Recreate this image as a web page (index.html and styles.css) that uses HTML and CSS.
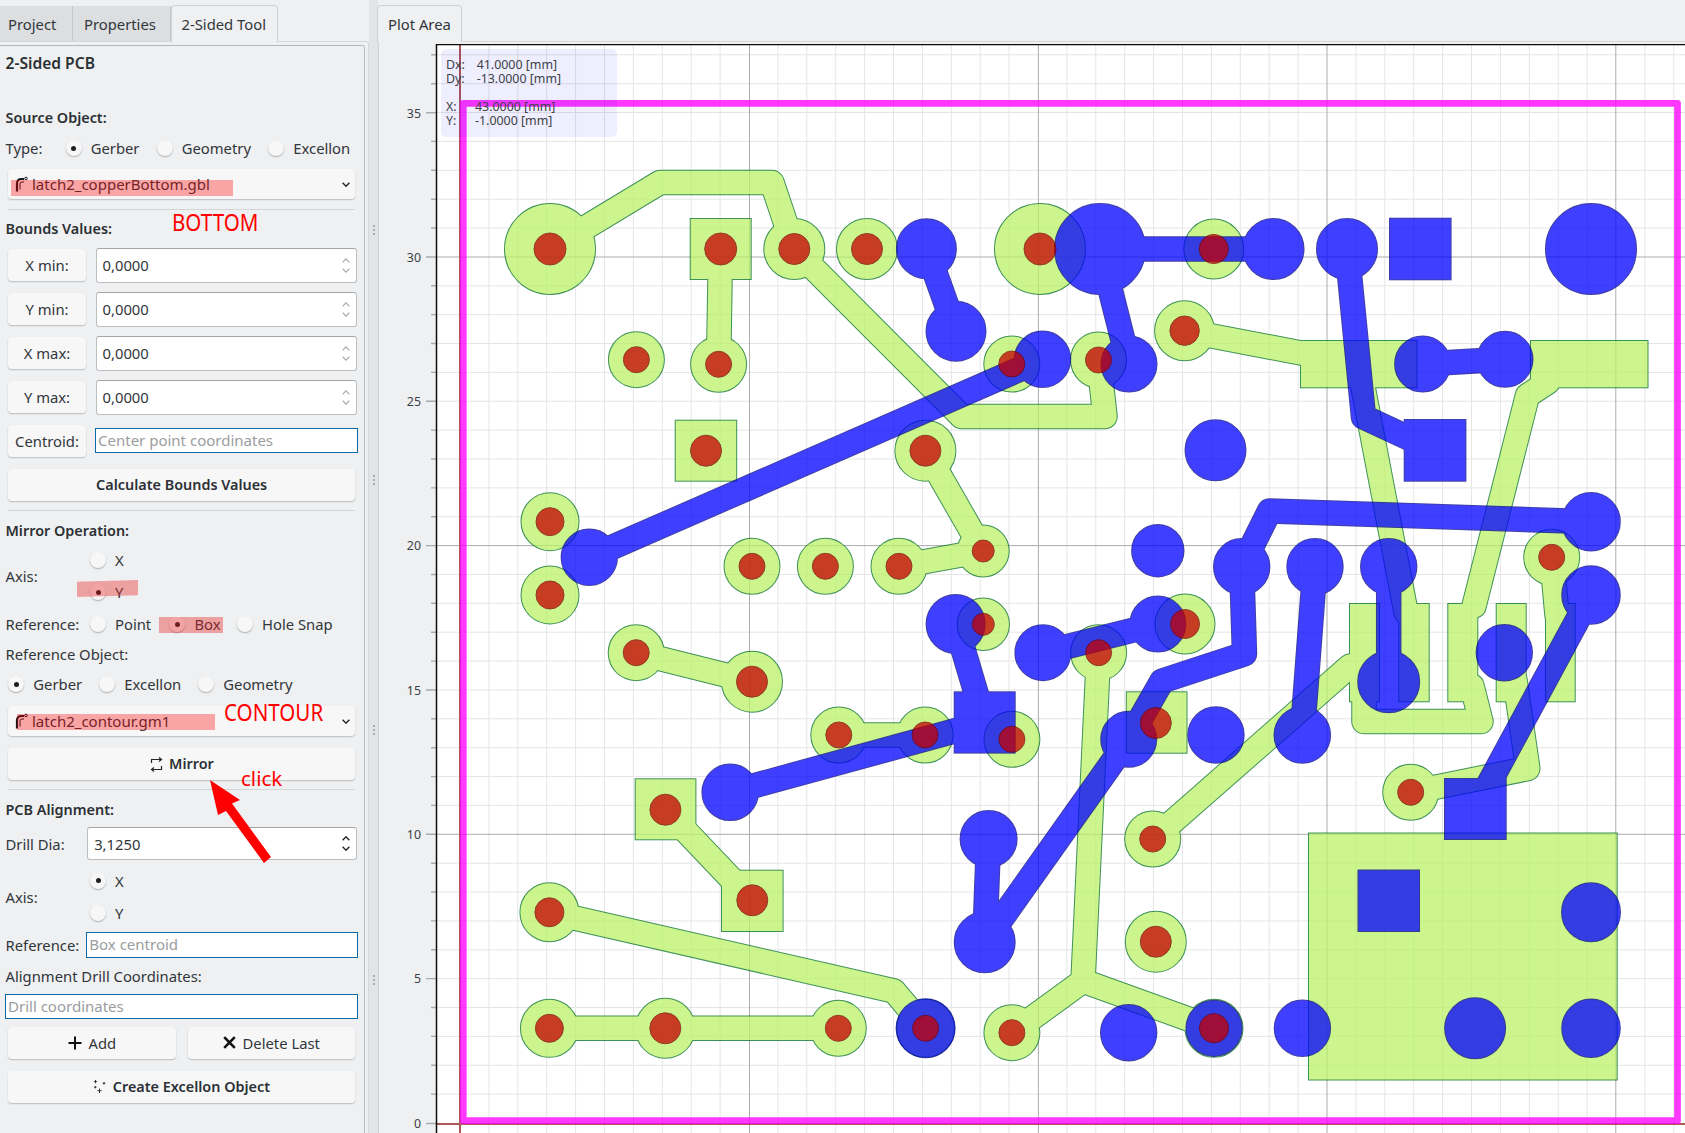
FILE: index.html
```html
<!DOCTYPE html>
<html lang="en">
<head>
<meta charset="utf-8">
<title>2-Sided PCB</title>
<link rel="stylesheet" href="styles.css">
</head>
<body>
<svg class="defs" width="0" height="0" aria-hidden="true">
  <symbol id="chev-down" viewBox="0 0 8 5"><path d="M.6.7 4 4.2 7.4.7"/></symbol>
  <symbol id="chev-up" viewBox="0 0 8 5"><path d="M.6 4.3 4 .8l3.4 3.5"/></symbol>
  <symbol id="i-gerber" viewBox="0 0 13 16"><path class="ic-b" d="M2 15.500V7.500Q2 3 6.500 3H9"/><path class="ic-t" d="M5 13.500V8Q5 6 7 6H9"/><circle class="ic-t" cx="11" cy="2.500" r="1.300"/></symbol>
</svg>
<div class="window">
  <aside class="left-dock">
    <nav class="tabs">
      <span class="tab t-project">Project</span>
      <span class="tab t-props">Properties</span>
      <span class="tab active t-tool">2-Sided Tool</span>
    </nav>
    <div class="outer-frame">
      <section class="panel">
        <div class="line title m7">2-Sided PCB</div>
        <div class="line strong m35">Source Object:</div>
        <div class="line opts type-row m10">
          <span>Type:</span>
          <label class="opt"><i class="radio on"></i>Gerber</label>
          <label class="opt"><i class="radio"></i>Geometry</label>
          <label class="opt"><i class="radio"></i>Excellon</label>
        </div>
        <div class="combo m11">
          <svg class="gerber-icon"><use href="#i-gerber"/></svg>
          <span class="grow">latch2_copperBottom.gbl</span>
          <svg class="chev"><use href="#chev-down"/></svg>
        </div>
        <hr class="sep s-a">
        <div class="line strong m9">Bounds Values:</div>
        <div class="field-row m9"><button class="btn">X min:</button><div class="spin"><span class="grow">0,0000</span><span class="arrows"><svg class="chev-s"><use href="#chev-up"/></svg><svg class="chev-s"><use href="#chev-down"/></svg></span></div></div>
        <div class="field-row m9"><button class="btn">Y min:</button><div class="spin"><span class="grow">0,0000</span><span class="arrows"><svg class="chev-s"><use href="#chev-up"/></svg><svg class="chev-s"><use href="#chev-down"/></svg></span></div></div>
        <div class="field-row m9"><button class="btn">X max:</button><div class="spin"><span class="grow">0,0000</span><span class="arrows"><svg class="chev-s"><use href="#chev-up"/></svg><svg class="chev-s"><use href="#chev-down"/></svg></span></div></div>
        <div class="field-row m9"><button class="btn">Y max:</button><div class="spin"><span class="grow">0,0000</span><span class="arrows"><svg class="chev-s"><use href="#chev-up"/></svg><svg class="chev-s"><use href="#chev-down"/></svg></span></div></div>
        <div class="centroid-row m10"><button class="btn">Centroid:</button><div class="text-in c-in">Center point coordinates</div></div>
        <button class="btn wide bold m12">Calculate Bounds Values</button>
        <hr class="sep s-b">
        <div class="line strong m10">Mirror Operation:</div>
        <div class="axis-block m3">
          <span class="axis-label">Axis:</span>
          <div class="axis-opts">
            <label class="opt"><i class="radio"></i>X</label>
            <label class="opt"><i class="radio on"></i>Y</label>
          </div>
        </div>
        <div class="line opts ref-row m6">
          <span>Reference:</span>
          <label class="opt"><i class="radio"></i>Point</label>
          <label class="opt"><i class="radio on"></i>Box</label>
          <label class="opt"><i class="radio"></i>Hole Snap</label>
        </div>
        <div class="line m10">Reference Object:</div>
        <div class="line opts refobj-row m10">
          <label class="opt"><i class="radio on"></i>Gerber</label>
          <label class="opt"><i class="radio"></i>Excellon</label>
          <label class="opt"><i class="radio"></i>Geometry</label>
        </div>
        <div class="combo m12">
          <svg class="gerber-icon"><use href="#i-gerber"/></svg>
          <span class="grow">latch2_contour.gm1</span>
          <svg class="chev"><use href="#chev-down"/></svg>
        </div>
        <button class="btn wide bold m12">
          <svg class="ic ic-mirror" viewBox="0 0 13 15"><path d="M1.500 6V2.500H11.500M9 .5l2.500 2-2.500 2M11.500 9v3.500H1.500M4 10.500l-2.500 2 2.500 2"/></svg>
          Mirror
        </button>
        <hr class="sep s-c">
        <div class="line strong m10">PCB Alignment:</div>
        <div class="drill-row m7"><span>Drill Dia:</span><div class="spin dark"><span class="grow">3,1250</span><span class="arrows"><svg class="chev-s"><use href="#chev-up"/></svg><svg class="chev-s"><use href="#chev-down"/></svg></span></div></div>
        <div class="axis-block m5">
          <span class="axis-label">Axis:</span>
          <div class="axis-opts">
            <label class="opt"><i class="radio on"></i>X</label>
            <label class="opt"><i class="radio"></i>Y</label>
          </div>
        </div>
        <div class="ref-in-row m3"><span>Reference:</span><div class="text-in">Box centroid</div></div>
        <div class="line m8">Alignment Drill Coordinates:</div>
        <div class="text-in drill-in m8">Drill coordinates</div>
        <div class="pair m8">
          <button class="btn">
            <svg class="ic ic-plus" viewBox="0 0 14 14"><path d="M7 .5v13M.5 7h13"/></svg>
            Add
          </button>
          <button class="btn">
            <svg class="ic ic-x" viewBox="0 0 13 13"><path d="M1.200 1.200l10.600 10.600M11.800 1.200 1.200 11.800"/></svg>
            Delete Last
          </button>
        </div>
        <button class="btn wide bold m12">
          <svg class="ic ic-spark" viewBox="0 0 13 13"><path d="M2.500 0v3.200M.9 1.600h3.200M11 2v2.600M9.700 3.300h2.600M2.300 6v2.400M1.100 7.200h2.400M6.500 8.500V13M4.300 10.700h4.400"/></svg>
          Create Excellon Object
        </button>
      </section>
    </div>
    <span class="mark mark-bottom"></span>
    <span class="mark mark-y"></span>
    <span class="mark mark-box"></span>
    <span class="mark mark-contour"></span>
    <span class="note caps note-bottom">BOTTOM</span>
    <span class="note caps note-contour">CONTOUR</span>
    <span class="note note-click">click</span>
    <svg class="red-arrow" width="80" height="100" viewBox="200 770 80 100"><polygon points="210,780 240,800 232,803.500 271,857 264,863 226,811 218,815"/></svg>
  </aside>
  <div class="splitter"><i></i><i></i><i></i><i></i></div>
  <main class="right-dock">
    <nav class="tabs"><span class="tab active t-plot">Plot Area</span></nav>
    <div class="plot-frame">
      <svg class="plot" width="1306" height="1089" viewBox="379 44 1306 1089">
        <defs>
          <g id="lime-pads">
            <circle cx="550" cy="249" r="45"/><circle cx="794.300" cy="249" r="30"/><circle cx="867" cy="249" r="30"/><circle cx="1040" cy="249" r="45"/><circle cx="1213.800" cy="249" r="29.500"/><circle cx="636.400" cy="359.700" r="27.500"/><circle cx="718.600" cy="364.300" r="27.500"/><circle cx="1011.800" cy="364" r="27.500"/><circle cx="1098.500" cy="360" r="27.500"/><circle cx="1184.600" cy="330.700" r="29.500"/><circle cx="925.400" cy="450.700" r="30"/><circle cx="550" cy="521.700" r="28.500"/><circle cx="550" cy="595" r="28.500"/><circle cx="752" cy="566.300" r="27.500"/><circle cx="825.400" cy="566.300" r="27.500"/><circle cx="899" cy="566.300" r="27.500"/><circle cx="983.200" cy="551" r="25.500"/><circle cx="1551.700" cy="557.300" r="27.500"/><circle cx="983.300" cy="624.300" r="25.700"/><circle cx="1185" cy="624" r="29.500"/><circle cx="1098.600" cy="652.700" r="27.500"/><circle cx="636.200" cy="652.700" r="27.500"/><circle cx="752" cy="681.700" r="30"/><circle cx="838.800" cy="735" r="27.500"/><circle cx="925.100" cy="735" r="27.500"/><circle cx="1011.900" cy="739.300" r="27.500"/><circle cx="1410.700" cy="792.300" r="27.500"/><circle cx="1152.700" cy="839" r="27.500"/><circle cx="1155.800" cy="941.700" r="30"/><circle cx="549.400" cy="912.300" r="29"/><circle cx="549.400" cy="1028.300" r="28.500"/><circle cx="665.300" cy="1028.300" r="29.500"/><circle cx="838.300" cy="1028.300" r="27.500"/><circle cx="925.600" cy="1028.300" r="28.500"/><circle cx="1011.900" cy="1032.700" r="27.500"/><circle cx="1214" cy="1028.300" r="28.500"/>
            <rect x="690.700" y="219" width="60" height="60"/><rect x="675.700" y="420.700" width="60.500" height="60"/><rect x="1126.800" y="692.300" width="59.700" height="60.400"/><rect x="635.700" y="779.300" width="59.700" height="60"/><rect x="722" y="870.700" width="60.600" height="60.300"/>
            <rect x="1301" y="341" width="115.500" height="46.300"/><rect x="1531" y="341" width="116.500" height="46.300"/><rect x="1350" y="604" width="29" height="97.300"/><rect x="1399.300" y="604" width="29.400" height="97.300"/><rect x="1448.300" y="604" width="29" height="97.300"/><rect x="1496.700" y="604" width="29" height="97.300"/><rect x="1546" y="604" width="28.700" height="97.300"/><rect x="1309" y="833.500" width="307.700" height="246"/>
          </g>
          <path id="lime-tracks" d="M550 249 660 182.500H772L794.300 249M720.500 249 718.600 364.300M794.300 249 961.500 416.500H1105L1101.500 385 1098.500 360M925.400 450.700 983 551M899 566.300 983.200 551M636.200 652.700 752 681.700M838.800 735H925M665.500 809.700 752.300 901M549.400 912.300 894 991 925.600 1028.300M549.400 1028.300H838.300M1098.600 652.700 1083 981M1011.900 1032.700 1083 981 1214 1028.300M1153 839 1350 666M1184.600 330.700 1301 353M1548 382 1527.500 395.500 1474 606M1364 700V721.600H1481L1472 686M1363 387 1406 612M1551.700 557.300 1557 615M1410.700 792.300 1527.800 768.500 1515 680"/>
          <g id="blue-pads">
            <circle cx="926.400" cy="248.700" r="29.500"/><circle cx="956" cy="331.300" r="29.500"/><circle cx="1042.500" cy="359.300" r="27.700"/><circle cx="589.300" cy="557.300" r="27.700"/><circle cx="1100" cy="249" r="45"/><circle cx="1273.500" cy="249" r="30"/><circle cx="1347" cy="249" r="30"/><circle cx="1591" cy="249" r="45"/><circle cx="1129" cy="364" r="27.500"/><circle cx="1422.600" cy="364" r="27.500"/><circle cx="1505" cy="359.300" r="27.500"/><circle cx="1215.500" cy="450.300" r="30"/><circle cx="1157.800" cy="550.700" r="25.700"/><circle cx="1241.700" cy="566.700" r="27.700"/><circle cx="1315" cy="566.700" r="27.700"/><circle cx="1388.700" cy="566.700" r="27.700"/><circle cx="1591" cy="521.700" r="28.800"/><circle cx="1591" cy="595" r="28.800"/><circle cx="1504.300" cy="652.700" r="27.700"/><circle cx="955.600" cy="624" r="29"/><circle cx="1157.800" cy="624" r="27.500"/><circle cx="1042.900" cy="652.700" r="27.500"/><circle cx="1128.700" cy="739.300" r="27.500"/><circle cx="1216" cy="735" r="27.700"/><circle cx="1302.300" cy="735" r="27.800"/><circle cx="1388.700" cy="681.700" r="30.500"/><circle cx="730.200" cy="792.300" r="27.800"/><circle cx="988.600" cy="839" r="28"/><circle cx="984.700" cy="942.300" r="30"/><circle cx="1591" cy="912.300" r="29"/><circle cx="925.600" cy="1028.300" r="29"/><circle cx="1128.700" cy="1032.700" r="27.700"/><circle cx="1214" cy="1028.300" r="27.600"/><circle cx="1302.400" cy="1028.300" r="27.700"/><circle cx="1475.100" cy="1028.300" r="30"/><circle cx="1591" cy="1028.300" r="28.800"/>
            <rect x="1390" y="218.700" width="60.600" height="60.600"/><rect x="1404.700" y="420" width="60.700" height="60.700"/><rect x="954.700" y="692.300" width="60" height="60.300"/><rect x="1445" y="779" width="60.700" height="60"/><rect x="1358.500" y="870.500" width="60.500" height="60.500"/>
          </g>
          <path id="blue-tracks" d="M589.300 557.300 1042.500 359.300M926.400 248.700 956 331.300M1100 249H1273.500M1100 249 1129 364M1347 249 1363.500 417 1435 450.300M1422.600 364 1505 359.300M1591 521.700 1269.500 511 1241.700 566.700M1241.700 566.700 1244.500 654 1162 681 1128.700 739.300 985 942M1315 566.700 1302.300 735M1388.700 566.700V681.700M1591 595 1475.300 809M955.600 624 984.800 722.500M730.200 792.300 985 722.600M1042.900 652.700 1157.800 624M988.600 839 984.700 942.300"/>
        </defs>

        <rect class="canvas" x="436" y="44" width="1249" height="1089"/>
        <path class="grid-minor" d="M488.900 44V1133M517.800 44V1133M546.700 44V1133M575.600 44V1133M604.500 44V1133M633.400 44V1133M662.300 44V1133M691.200 44V1133M720.100 44V1133M777.900 44V1133M806.800 44V1133M835.700 44V1133M864.600 44V1133M893.500 44V1133M922.400 44V1133M951.300 44V1133M980.200 44V1133M1009.100 44V1133M1066.900 44V1133M1095.800 44V1133M1124.700 44V1133M1153.600 44V1133M1182.500 44V1133M1211.400 44V1133M1240.300 44V1133M1269.200 44V1133M1298.100 44V1133M1355.900 44V1133M1384.800 44V1133M1413.700 44V1133M1442.600 44V1133M1471.500 44V1133M1500.400 44V1133M1529.300 44V1133M1558.200 44V1133M1587.100 44V1133M1644.900 44V1133M1673.800 44V1133M436 1094.100H1685M436 1065.300H1685M436 1036.400H1685M436 1007.500H1685M436 978.600H1685M436 949.800H1685M436 920.900H1685M436 892H1685M436 863.200H1685M436 805.400H1685M436 776.600H1685M436 747.700H1685M436 718.800H1685M436 690H1685M436 661.100H1685M436 632.200H1685M436 603.300H1685M436 574.500H1685M436 516.700H1685M436 487.900H1685M436 459H1685M436 430.100H1685M436 401.200H1685M436 372.400H1685M436 343.500H1685M436 314.600H1685M436 285.800H1685M436 228H1685M436 199.200H1685M436 170.300H1685M436 141.400H1685M436 112.500H1685M436 83.700H1685M436 54.800H1685"/>
        <path class="grid-major" d="M749.500 44V1133M1038.400 44V1133M1327 44V1133M1615.800 44V1133M436 834.300H1685M436 545.600H1685M436 257H1685"/>

        <g class="layer lime">
          <use class="pad-edge" href="#lime-pads"/>
          <use class="track-edge" href="#lime-tracks"/>
          <use class="pad-fill" href="#lime-pads"/>
          <use class="track-fill" href="#lime-tracks"/>
        </g>
        <g class="layer blue">
          <use class="pad-edge" href="#blue-pads"/>
          <use class="track-edge" href="#blue-tracks"/>
          <use class="pad-fill" href="#blue-pads"/>
          <use class="track-fill" href="#blue-tracks"/>
        </g>
        <g class="layer drills">
          <circle cx="550" cy="249" r="16"/><circle cx="720.700" cy="249" r="16"/><circle cx="794.300" cy="249" r="15.500"/><circle cx="867" cy="249" r="15.500"/><circle cx="1040" cy="249" r="16"/><circle cx="1213.800" cy="249" r="14.600"/><circle cx="636.400" cy="359.700" r="13"/><circle cx="718.600" cy="364.300" r="13"/><circle cx="1011.800" cy="364" r="13"/><circle cx="1098.500" cy="360" r="13"/><circle cx="1184.600" cy="330.700" r="14.700"/><circle cx="706" cy="450.700" r="15.500"/><circle cx="925.400" cy="450.700" r="15.500"/><circle cx="550" cy="521.700" r="14"/><circle cx="550" cy="595" r="14"/><circle cx="752" cy="566.300" r="13"/><circle cx="825.400" cy="566.300" r="13"/><circle cx="899" cy="566.300" r="13"/><circle cx="983.200" cy="551" r="11"/><circle cx="1551.700" cy="557.300" r="13"/><circle cx="983.300" cy="624.300" r="11"/><circle cx="1185" cy="624" r="14.500"/><circle cx="1098.600" cy="652.700" r="13"/><circle cx="636.200" cy="652.700" r="13"/><circle cx="752" cy="681.700" r="15.500"/><circle cx="838.800" cy="735" r="13"/><circle cx="925.100" cy="735" r="13"/><circle cx="1011.900" cy="739.300" r="13"/><circle cx="1155.800" cy="723" r="15.500"/><circle cx="1410.700" cy="792.300" r="13"/><circle cx="665.400" cy="809.700" r="15.500"/><circle cx="1152.700" cy="839" r="13"/><circle cx="752.300" cy="900.300" r="15.500"/><circle cx="549.400" cy="912.300" r="14.500"/><circle cx="1155.800" cy="941.700" r="15.500"/><circle cx="549.400" cy="1028.300" r="14"/><circle cx="665.300" cy="1028.300" r="15.500"/><circle cx="838.300" cy="1028.300" r="13"/><circle cx="925.600" cy="1028.300" r="13"/><circle cx="1011.900" cy="1032.700" r="13"/><circle cx="1214" cy="1028.300" r="14.600"/>
        </g>

        <path class="origin" d="M460 44V1133M436 1124H1685"/>
        <rect class="contour" x="463.300" y="103.300" width="1214.200" height="1017.400"/>

        <path class="tick" d="M431 1094.100h5M431 1065.300h5M431 1036.400h5M431 1007.500h5M431 949.800h5M431 920.900h5M431 892h5M431 863.200h5M431 805.400h5M431 776.600h5M431 747.700h5M431 718.800h5M431 661.100h5M431 632.200h5M431 603.300h5M431 574.500h5M431 516.700h5M431 487.900h5M431 459h5M431 430.100h5M431 372.400h5M431 343.500h5M431 314.600h5M431 285.800h5M431 228h5M431 199.200h5M431 170.300h5M431 141.400h5M431 83.700h5M431 54.800h5M426 1123.500h10M426 978.600h10M426 834.300h10M426 690h10M426 545.600h10M426 401.200h10M426 257h10M426 112.700h10"/>
        <text class="axis-num" x="421" y="117.500">35</text>
        <text class="axis-num" x="421" y="261.500">30</text>
        <text class="axis-num" x="421" y="406">25</text>
        <text class="axis-num" x="421" y="550">20</text>
        <text class="axis-num" x="421" y="694.500">15</text>
        <text class="axis-num" x="421" y="838.500">10</text>
        <text class="axis-num" x="421" y="983">5</text>
        <text class="axis-num" x="421" y="1127.500">0</text>
        <path class="plot-border" d="M436.500 1133V44.500H1685"/>
      </svg>
      <div class="readout">
        <span>Dx:</span><span>41.0000 [mm]</span>
        <span>Dy:</span><span>-13.0000 [mm]</span>
        <span class="blank"></span><span class="blank"></span>
        <span>X:</span><span class="tight">43.0000 [mm]</span>
        <span>Y:</span><span class="tight">-1.0000 [mm]</span>
      </div>
    </div>
  </main>
</div>
</body>
</html>
```
FILE: styles.css
```css
* { box-sizing: border-box; }
html, body { margin: 0; height: 100%; overflow: hidden; }
body { background: #eff0f1; color: #31363b; font: 14.800px/20px "Noto Sans", sans-serif; }
.defs { position: absolute; }
.window { display: flex; width: 1685px; height: 1133px; overflow: hidden; }

/* docks and tabs */
.left-dock { position: relative; width: 369px; flex: none; display: flex; flex-direction: column; }
.right-dock { flex: 1; min-width: 0; display: flex; flex-direction: column; }
.splitter { width: 9px; flex: none; background: #e3e4e6; display: flex; flex-direction: column; align-items: center; padding-top: 225px; gap: 240px; }
.splitter i { width: 2px; height: 10px; background: radial-gradient(circle at 50% 1px, #a9abae 1px, transparent 1px) 0 0 / 2px 4px; }
.tabs { height: 41px; flex: none; display: flex; align-items: flex-end; position: relative; }
.tab { height: 35px; display: flex; align-items: center; background: #dcdee0; border-right: 1px solid #c6c8ca; }
.t-project { width: 73px; padding-left: 8px; }
.t-props { width: 98px; padding-left: 11px; }
.tab.active { height: 37px; background: #eff0f1; border: 1px solid #cfd1d3; border-bottom: 0; border-radius: 4px 4px 0 0; margin-bottom: -1px; position: relative; z-index: 1; }
.t-tool { width: 107px; padding-left: 9.500px; }
.t-plot { width: 85px; padding-left: 10px; margin-left: -1px; }

.outer-frame { flex: 1; min-height: 0; border-top: 1px solid #d5d7d9; border-right: 1px solid #d5d7d9; border-radius: 0 3px 0 0; padding: 3px 3px 0 0; }
.panel { height: 100%; border-top: 1px solid #b4b6b8; border-right: 1px solid #bcbec0; border-radius: 0 3px 0 0; padding: 0 6.300px 0 5.500px; display: flex; flex-direction: column; background: #eff0f1; }

/* vertical rhythm */
.m3 { margin-top: 3.300px; } .m4 { margin-top: 4px; } .m5 { margin-top: 5px; } .m6 { margin-top: 6px; } .m7 { margin-top: 7px; } .m8 { margin-top: 8px; }
.m9 { margin-top: 9px; } .m10 { margin-top: 10px; } .m11 { margin-top: 11px; } .m12 { margin-top: 12px; } .m35 { margin-top: 35px; }

.line { height: 20px; flex: none; white-space: nowrap; }
.strong { font-size: 14.400px; font-weight: 600; color: #2b3035; }
.title { font-size: 15.600px; font-weight: 600; color: #2b3035; }
.grow { flex: 1; min-width: 0; }

.sep { height: 1px; border: 0; background: #d3d5d7; margin: 0 2.400px 0 2.500px; flex: none; }
.s-a { margin-top: 9.500px; }
.s-b { margin-top: 9.500px; }
.s-c { margin-top: 9px; }

/* radio options */
.opts { display: grid; align-items: center; }
.opt { display: flex; align-items: center; gap: 9px; white-space: nowrap; }
.radio { width: 16px; height: 16px; flex: none; border-radius: 50%; background: #f7f7f8; box-shadow: 0 1px 1.500px rgba(0,0,0,.28); position: relative; }
.radio.on::after { content: ""; position: absolute; left: 5.500px; top: 5.500px; width: 5px; height: 5px; border-radius: 50%; background: #1c1f22; }
.type-row { grid-template-columns: 60.200px 91px 111.600px auto; }
.ref-row { grid-template-columns: 84.500px 79.400px 67.600px auto; }
.refobj-row { grid-template-columns: 91px 99px auto; padding-left: 2.800px; }
.axis-block { display: flex; align-items: center; height: 64px; flex: none; }
.axis-label { width: 84.500px; }
.axis-opts { display: grid; grid-auto-rows: 32px; align-items: center; }

/* combos */
.combo { height: 30px; flex: none; margin-left: 2.500px; margin-right: 2.400px; display: flex; align-items: center; gap: 4px; padding: 0 5px 0 7px; background: #f7f7f8; border-radius: 4px; box-shadow: 0 1px 1.500px rgba(0,0,0,.22); font-size: 15px; }
.gerber-icon { width: 13px; height: 16px; flex: none; }
.ic-b, .ic-t { fill: none; stroke: #16181a; }
.ic-b { stroke-width: 2.200; }
.ic-t { stroke-width: 1; }
.chev { width: 8px; height: 5px; fill: none; stroke: #232629; stroke-width: 1.400; flex: none; overflow: visible; }

/* buttons */
.btn { font: inherit; color: #31363b; background: #f7f7f8; border: 0; border-radius: 4px; box-shadow: 0 1px 1.500px rgba(0,0,0,.22); padding: 0; height: 32px; flex: none; display: flex; align-items: center; justify-content: center; gap: 6.500px; }
.wide { margin-left: 2.500px; margin-right: 2.400px; }
.btn.bold { font-size: 14.400px; font-weight: 600; color: #2b3035; }
.ic { flex: none; fill: none; stroke: #232629; }
.ic-mirror { width: 13px; height: 15px; stroke-width: 1.200; }
.ic-plus { width: 14px; height: 14px; stroke: #111; stroke-width: 2; }
.ic-x { width: 13px; height: 13px; stroke: #111; stroke-width: 2.600; }
.ic-spark { width: 13px; height: 13px; stroke-width: .9; }

/* fields */
.field-row { display: grid; grid-template-columns: 78px 261px; column-gap: 9.500px; align-items: center; margin-left: 2.500px; height: 35px; flex: none; }
.spin { height: 35px; display: flex; align-items: center; padding: 0 6px 0 6px; background: #fff; border: 1px solid #bcbec0; border-top-color: #a4a6a8; border-radius: 3px; }
.arrows { display: flex; flex-direction: column; gap: 5px; }
.chev-s { width: 8px; height: 5px; display: block; fill: none; stroke: #a7a9ab; stroke-width: 1.200; overflow: visible; }
.dark .chev-s { stroke: #232629; stroke-width: 1.400; }
.text-in { height: 25.400px; background: #fff; border: 1px solid #0e69a8; padding-left: 2px; line-height: 23.400px; color: #9b9d9f; white-space: nowrap; font-size: 15px; }
.centroid-row { display: grid; grid-template-columns: 78px 262.700px; column-gap: 9px; align-items: center; margin-left: 2.500px; height: 32px; flex: none; }
.drill-row { display: flex; align-items: center; justify-content: space-between; height: 32.600px; flex: none; margin-right: 1.200px; }
.drill-row .spin { width: 269.400px; height: 32.600px; padding-left: 6px; }
.ref-in-row { display: flex; align-items: center; justify-content: space-between; height: 25.400px; flex: none; }
.ref-in-row .text-in { width: 271.400px; }
.drill-in { flex: none; margin-left: -.500px; }
.pair { display: grid; grid-template-columns: 168px 167.600px; column-gap: 11.700px; margin-left: 2.500px; flex: none; }

/* red annotations over the panel */
.mark { position: absolute; background: rgba(255,0,0,.33); pointer-events: none; }
.mark-bottom { left: 11px; top: 180px; width: 222px; height: 15.700px; }
.mark-contour { left: 17px; top: 714px; width: 198px; height: 16px; }
.mark-box { left: 159px; top: 617.300px; width: 64px; height: 16px; background: rgba(235,30,30,.38); }
.mark-y { left: 77px; top: 580px; width: 61px; height: 17px; background: rgba(235,30,30,.38); clip-path: polygon(0 10%, 100% 0, 100% 90%, 0 100%); }
.note { position: absolute; color: #f00; white-space: nowrap; font-family: "Noto Sans", sans-serif; font-size: 20.500px; line-height: 28px; }
.caps { font-size: 23.500px; transform: scaleX(.875); transform-origin: 0 50%; }
.note-bottom { left: 171.500px; top: 208px; }
.note-contour { left: 224px; top: 697.500px; }
.note-click { left: 241px; top: 764px; }
.red-arrow { position: absolute; left: 200px; top: 770px; fill: #f00; }

/* plot */
.plot-frame { position: relative; flex: 1; min-height: 0; border-top: 1px solid #d5d7d9; border-left: 1px solid #d0d2d4; overflow: hidden; background: #eff0f1; }
.plot { display: block; margin-top: 2px; }
.canvas { fill: #fff; }
.grid-minor { fill: none; stroke: #e5e5e5; stroke-width: 1; }
.grid-major { fill: none; stroke: #acacac; stroke-width: 1; }
.layer { opacity: .75; }
.lime { --edge: #006e20; --face: #bbf268; }
.blue { --edge: #00008c; --face: #0000ff; }
.pad-edge { fill: var(--edge); stroke: var(--edge); stroke-width: 2; }
.track-edge { fill: none; stroke: var(--edge); stroke-width: 25.500; stroke-linecap: round; stroke-linejoin: round; }
.pad-fill { fill: var(--face); stroke: none; }
.track-fill { fill: none; stroke: var(--face); stroke-width: 23.500; stroke-linecap: round; stroke-linejoin: round; }
.drills { fill: #c40000; stroke: #7a0000; stroke-width: 1; }
.origin { fill: none; stroke: #a13b3b; stroke-width: 2; opacity: .85; }
.contour { fill: none; stroke: #ff00ff; stroke-width: 6.700; stroke-linejoin: round; opacity: .78; }
.tick { fill: none; stroke: #a9abad; stroke-width: 1.400; }
.axis-num { font: 12.400px "Noto Sans", sans-serif; fill: #3c4145; text-anchor: end; }
.plot-border { fill: none; stroke: #0c0c0c; stroke-width: 1.500; }

.readout { position: absolute; left: 62px; top: 7.300px; width: 175.700px; height: 88px; padding: 8.500px 0 0 5px; border-radius: 5px; background: rgba(0,0,255,.065); display: grid; grid-template-columns: 30.700px auto; grid-auto-rows: 14px; font-size: 12.400px; line-height: 14px; color: #3c4145; white-space: nowrap; }
.readout .tight { margin-left: -1.700px; }
```
